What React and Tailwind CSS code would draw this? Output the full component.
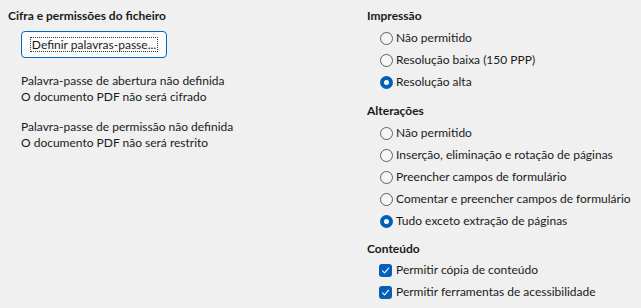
import React from 'react';

const Radio = ({ checked, label }) => (
  <div className="flex items-center h-[22px] pl-[13px]">
    {checked ? (
      <span className="w-[13px] h-[13px] rounded-full bg-[#005fb8] flex items-center justify-center shrink-0">
        <span className="w-[5px] h-[5px] rounded-full bg-white" />
      </span>
    ) : (
      <span className="w-[13px] h-[13px] rounded-full border border-[#5f5f5f] bg-[#f6f6f6] shrink-0" />
    )}
    <span className="ml-[3px] whitespace-nowrap">{label}</span>
  </div>
);

const Check = ({ label }) => (
  <div className="flex items-center h-[22px] pl-[12px]">
    <span className="w-[13px] h-[13px] rounded-[3px] bg-[#005fb8] flex items-center justify-center shrink-0">
      <svg width="9" height="9" viewBox="0 0 9 9" fill="none">
        <path d="M1.5 4.8 L3.6 6.8 L7.6 2.2" stroke="white" strokeWidth="1.1" strokeLinecap="round" strokeLinejoin="round" />
      </svg>
    </span>
    <span className="ml-[4px] whitespace-nowrap">{label}</span>
  </div>
);

const App = () => {
  return (
    <div className="w-[641px] h-[308px] bg-[#f0f0f0] text-[#1a1a1a] text-[12px] leading-[16px] flex overflow-hidden font-['Lato','Noto_Sans',sans-serif]">
      {/* Left: encryption */}
      <div className="w-[367px] shrink-0 pl-[8px] pt-[8px]">
        <div className="font-bold h-[16px]">Cifra e permissões do ficheiro</div>
        <button className="mt-[7px] ml-[13px] w-[146px] h-[27px] bg-[#fdfdfd] border border-[#0067c0] rounded-[4px] flex items-center justify-center">
          <span className="outline outline-1 outline-dotted outline-[#333] px-[1px] leading-[13px] whitespace-nowrap">
            Definir palavras-passe...
          </span>
        </button>
        <div className="mt-[15px] ml-[13px] whitespace-nowrap">
          <div>Palavra-passe de abertura não definida</div>
          <div>O documento PDF não será cifrado</div>
        </div>
        <div className="mt-[14px] ml-[13px] whitespace-nowrap">
          <div>Palavra-passe de permissão não definida</div>
          <div>O documento PDF não será restrito</div>
        </div>
      </div>

      {/* Right: permissions */}
      <div className="flex-1 pt-[8px]">
        <div className="font-bold h-[16px]">Impressão</div>
        <div className="mt-[3px]">
          <Radio label="Não permitido" />
          <Radio label="Resolução baixa (150 PPP)" />
          <Radio checked label="Resolução alta" />
        </div>

        <div className="font-bold h-[16px] mt-[10px]">Alterações</div>
        <div className="mt-[3px]">
          <Radio label="Não permitido" />
          <Radio label="Inserção, eliminação e rotação de páginas" />
          <Radio label="Preencher campos de formulário" />
          <Radio label="Comentar e preencher campos de formulário" />
          <Radio checked label="Tudo exceto extração de páginas" />
        </div>

        <div className="font-bold h-[16px] mt-[9px]">Conteúdo</div>
        <div className="mt-[2px]">
          <Check label="Permitir cópia de conteúdo" />
          <Check label="Permitir ferramentas de acessibilidade" />
        </div>
      </div>
    </div>
  );
};

export default App;
